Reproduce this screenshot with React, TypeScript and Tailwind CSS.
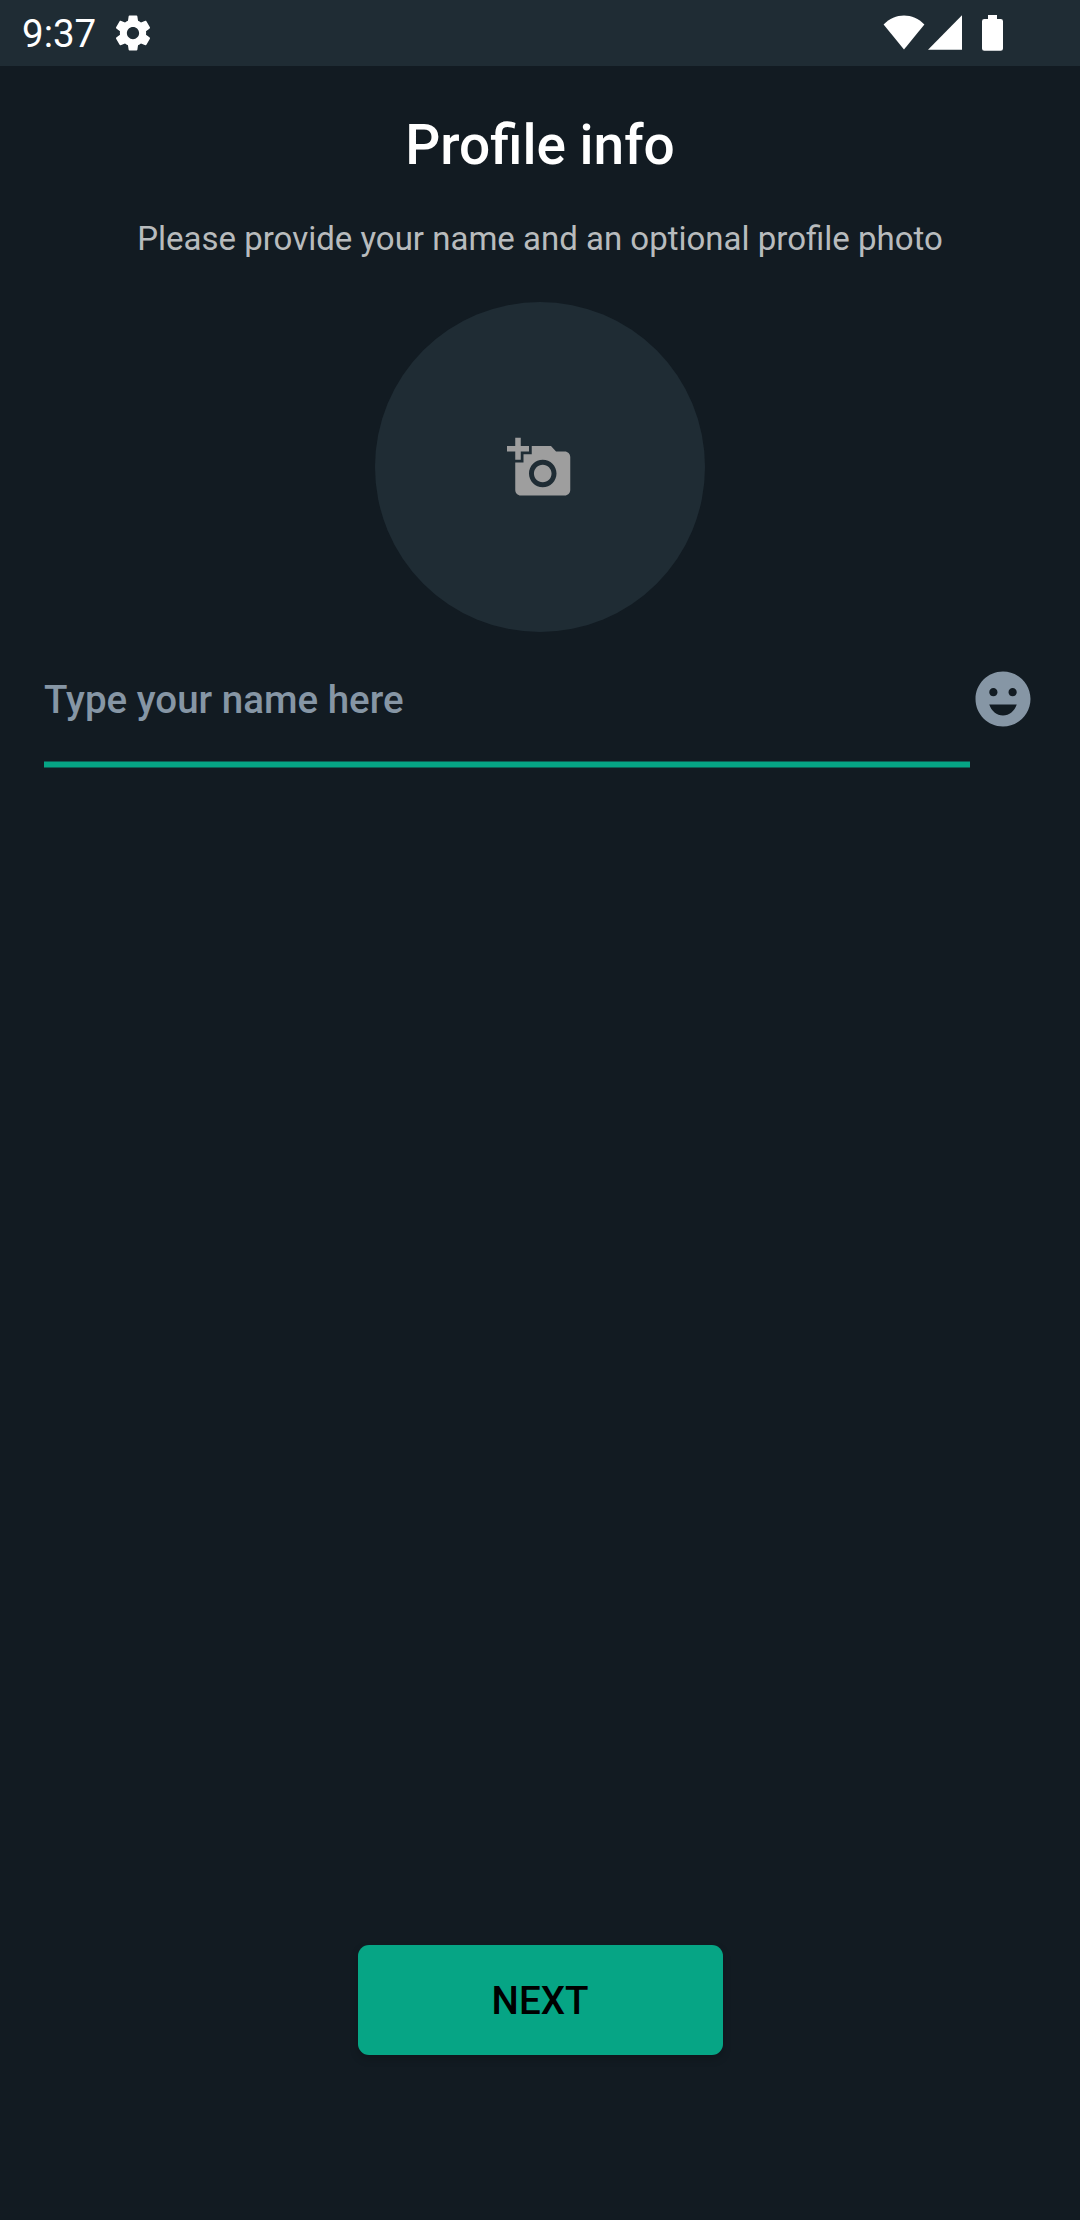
import React from 'react';
import { MdAddAPhoto, MdEmojiEmotions } from 'react-icons/md';

function StatusBar() {
  return (
    <header className="flex h-[66px] shrink-0 items-center bg-[#1f2c34] pr-[77px] pl-[22px] text-white">
      <span className="w-[74px] pt-[3px] text-[38.5px] leading-none">9:37</span>
      <svg className="ml-[16px] size-[42px]" viewBox="0 0 24 24" fill="currentColor">
        <path d="M19.43 12.98c.04-.32.07-.64.07-.98s-.03-.66-.07-.98l2.11-1.65c.19-.15.24-.42.12-.64l-2-3.46c-.12-.22-.39-.3-.61-.22l-2.49 1c-.52-.4-1.08-.73-1.69-.98l-.38-2.65C14.46 2.18 14.25 2 14 2h-4c-.25 0-.46.18-.49.42l-.38 2.65c-.61.25-1.17.59-1.69.98l-2.49-1c-.23-.09-.49 0-.61.22l-2 3.46c-.13.22-.07.49.12.64l2.11 1.65c-.04.32-.07.65-.07.98s.03.66.07.98l-2.11 1.65c-.19.15-.24.42-.12.64l2 3.46c.12.22.39.3.61.22l2.49-1c.52.4 1.08.73 1.69.98l.38 2.65c.03.24.24.42.49.42h4c.25 0 .46-.18.49-.42l.38-2.65c.61-.25 1.17-.59 1.69-.98l2.49 1c.23.09.49 0 .61-.22l2-3.46c.12-.22.07-.49-.12-.64l-2.11-1.65zM12 15.5c-1.93 0-3.5-1.57-3.5-3.5s1.57-3.5 3.5-3.5 3.5 1.57 3.5 3.5-1.57 3.5-3.5 3.5z" />
      </svg>
      <div className="ml-auto flex items-start">
        <svg className="h-[36px] w-[42px]" viewBox="0 0 42 36" fill="currentColor">
          <path d="M21 34.5 L0.6 9.5 C12 -2.5 30 -2.5 41.4 9.5 Z" />
        </svg>
        <svg className="ml-[3px] h-[36px] w-[35px]" viewBox="0 0 35 36" fill="currentColor">
          <path d="M34 0.3 V34.7 H0 Z" />
        </svg>
        <svg className="ml-[19px] h-[36px] w-[21px]" viewBox="0 0 21 36" fill="currentColor">
          <path d="M6 0 H15 V4 H18.7 Q21 4 21 6.3 V33.5 Q21 35.8 18.7 35.8 H2.3 Q0 35.8 0 33.5 V6.3 Q0 4 2.3 4 H6 Z" />
        </svg>
      </div>
    </header>
  );
}

export default function App() {
  return (
    <div className="flex h-[2220px] w-[1080px] flex-col bg-[#121b22] font-['Roboto',sans-serif]">
      <StatusBar />
      <main className="flex flex-1 flex-col items-center">
        <h1 className="mt-[47px] text-[55px] leading-[64px] font-medium text-white">Profile info</h1>
        <p className="mt-[42px] text-[33px] leading-[40px] text-[#b8bbbd]">
          Please provide your name and an optional profile photo
        </p>
        <button className="mt-[43px] flex size-[330px] items-center justify-center rounded-full bg-[#1f2c34] text-[#9e9e9e]">
          <MdAddAPhoto className="mt-[1px] size-[66px]" />
        </button>
        <div className="flex w-full pt-[30px] pl-[44px]">
          <div className="w-[926px]">
            <div className="h-[99px] text-[38.5px] leading-[76px] font-medium text-[#8696a5]">Type your name here</div>
            <div className="h-[7px] border-y border-[#0e5e54] bg-[#06a585]" />
          </div>
          <MdEmojiEmotions className="mt-[4px] size-[66px] text-[#8696a5]" />
        </div>
        <button className="mt-auto mb-[165px] h-[110px] w-[365px] rounded-[11px] bg-[#06a585] pt-[2px] text-[38.5px] font-medium text-black shadow-[0_4px_8px_rgba(0,0,0,0.2)]">
          NEXT
        </button>
      </main>
    </div>
  );
}
